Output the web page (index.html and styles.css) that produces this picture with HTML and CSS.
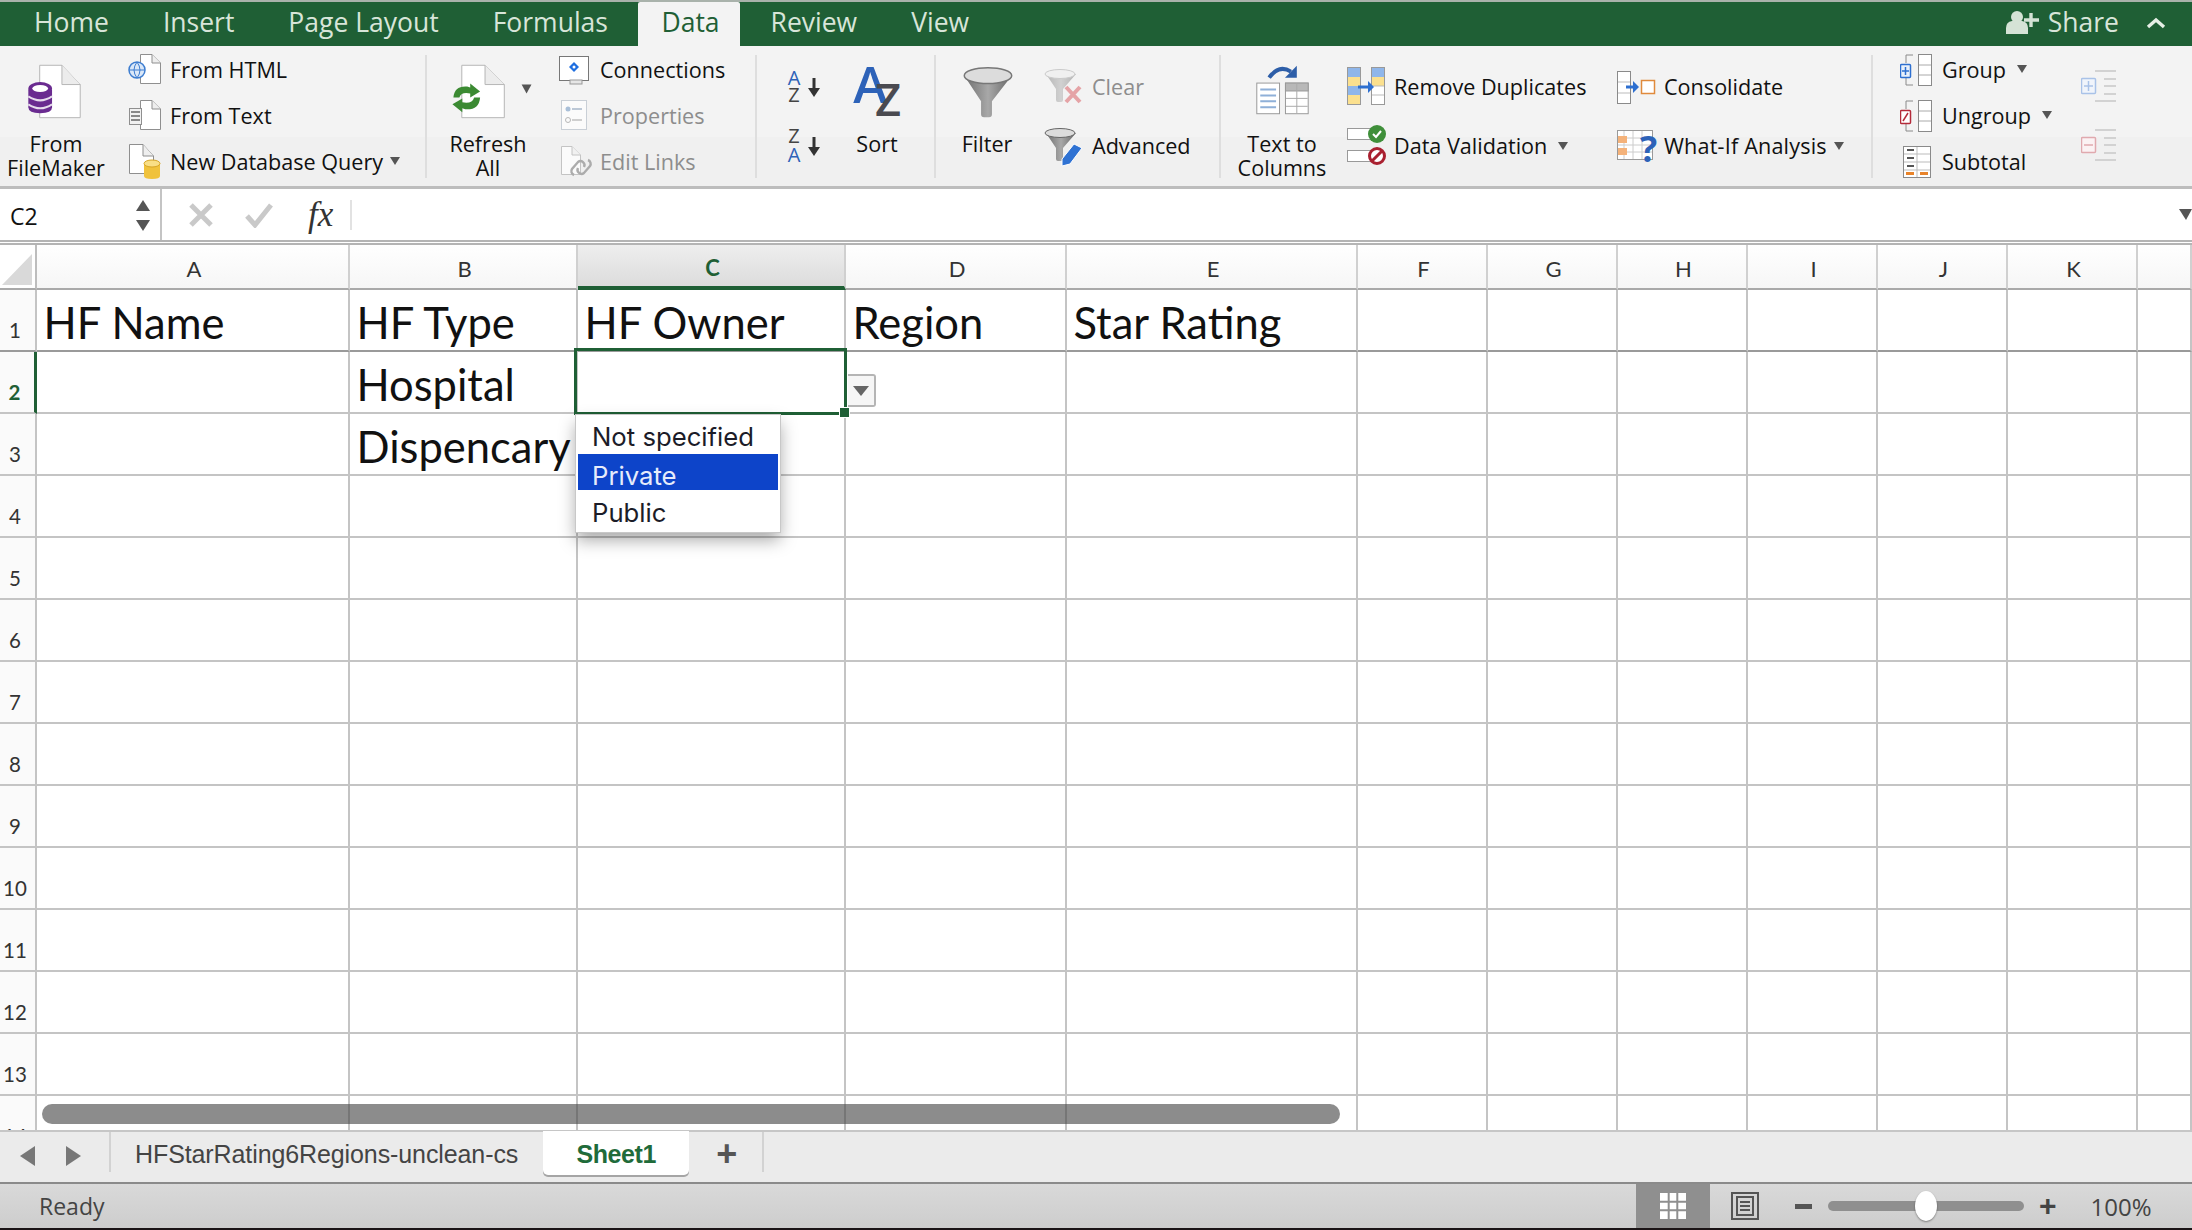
FILE: index.html
```html
<!DOCTYPE html>
<html lang="en">
<head>
<meta charset="utf-8">
<title>Excel</title>
<link rel="stylesheet" href="styles.css">
</head>
<body>
<div class="app">
  <header class="tabbar">
    <nav class="tabs">
      <span class="tab">Home</span><span class="tab">Insert</span><span class="tab">Page Layout</span><span class="tab">Formulas</span><span class="tab active">Data</span><span class="tab">Review</span><span class="tab">View</span>
    </nav>
    <div class="share">
      <svg width="34" height="24" viewBox="2006 10 34 24"><circle cx="2017" cy="16" r="6" fill="#d5e3d6"/><path d="M2006 33v-6q0-6 6-7h10q6 1 6 7v6z" fill="#d5e3d6"/><path d="M2031 12v14M2024 19h15" stroke="#d5e3d6" stroke-width="3.4"/></svg>
      <span class="share-text">Share</span>
      <svg class="chev" width="20" height="12" viewBox="0 0 20 12"><path d="M2 10l8-7 8 7" fill="none" stroke="#e6efe6" stroke-width="3.4"/></svg>
    </div>
  </header>

  <section class="ribbon">
    <div class="big w112">
      <svg width="112" height="86" viewBox="0 47 112 86">
        <path d="M39.5 65.5H62L80.5 85V118.5H39.5Z" fill="#fff" stroke="#b5b5b5"/><path d="M62 65.5V85H80.5" fill="#ececec" stroke="#b5b5b5"/>
        <path d="M28 90v18q0 6 12 6t12-6V90z" fill="#6a2b90"/>
        <ellipse cx="40" cy="89" rx="12" ry="6.5" fill="#6a2b90"/><ellipse cx="40" cy="89" rx="8" ry="3.6" fill="#fff"/>
        <path d="M28 97q12 8 24 0M28 105q12 8 24 0" fill="none" stroke="#e6dcec" stroke-width="2"/>
      </svg>
      <div class="label">From<br>FileMaker</div>
    </div>
    <div class="stack w297 ml16">
      <div class="item">
        <svg width="42" height="46" viewBox="128 47 42 46"><path d="M140.5 55.5H152L160.5 64V84.5H140.5Z" fill="#fff" stroke="#8f8f8f"/><path d="M152 55.5V64H160.5" fill="#eee" stroke="#8f8f8f"/><circle cx="137" cy="71" r="8" fill="#dbe8f8" stroke="#3d7dd0" stroke-width="1.5"/><path d="M129 71h16M137 63q-6 8 0 16M137 63q6 8 0 16" fill="none" stroke="#3d7dd0"/></svg>
        From HTML
      </div>
      <div class="item">
        <svg width="42" height="46" viewBox="128 93 42 46"><path d="M140.5 101.5H152L160.5 110V130.5H140.5Z" fill="#fff" stroke="#8f8f8f"/><path d="M152 101.5V110H160.5" fill="#eee" stroke="#8f8f8f"/><rect x="129.5" y="109.5" width="12" height="16" fill="#f1f1f1" stroke="#8f8f8f"/><path d="M131 113h9M131 117h9M131 121h9" stroke="#666" stroke-width="1.5"/></svg>
        From Text
      </div>
      <div class="item">
        <svg width="42" height="46" viewBox="128 139 42 46"><path d="M129.5 145.5H143L153.5 157V174.5H129.5Z" fill="#fff" stroke="#8f8f8f"/><path d="M143 145.5V157H153.5" fill="#eee" stroke="#8f8f8f"/><path d="M144 165v12q0 3 8 3t8-3v-12z" fill="#f0c23c"/><ellipse cx="152" cy="164.500" rx="8" ry="3.500" fill="#f9df86" stroke="#d6a526"/></svg>
        New Database Query<i class="caret ml10"></i>
      </div>
    </div>
    <div class="sep"></div>

    <div class="big w122">
      <svg width="122" height="86" viewBox="427 47 122 86">
        <path d="M461.500 65.500H485L504.500 85V118.500H461.500Z" fill="#fff" stroke="#b5b5b5"/><path d="M485 65.500V85H504.500" fill="#ececec" stroke="#b5b5b5"/>
        <path d="M453 98q1-12 14-11l3 1v-4l10 8-10 6v-4q-9-2-11 4z" fill="#3b8a32"/>
        <path d="M480 98q-1 13-15 12l-3-1v4l-10-8 10-6v4q10 2 12-5z" fill="#3b8a32"/>
        <path d="M522 85h10l-5 9z" fill="#555"/>
      </svg>
      <div class="label">Refresh<br>All</div>
    </div>
    <div class="stack w202 ml4">
      <div class="item">
        <svg width="47" height="46" viewBox="553 47 47 46"><rect x="559.500" y="57.500" width="29" height="24" fill="#fff" stroke="#777"/><rect x="570" y="81" width="12" height="4" fill="#e6e6e6" stroke="#999"/><path d="M574 63l5 5-5 5-5-5z" fill="#1f6fe0"/><circle cx="574" cy="68" r="1.500" fill="#fff"/></svg>
        Connections
      </div>
      <div class="item dim">
        <svg width="47" height="46" viewBox="553 93 47 46"><rect x="561.500" y="101.500" width="25" height="29" fill="#fbfbfb" stroke="#c9cfd6"/><circle cx="568" cy="110" r="2.500" fill="#a9bfd8"/><path d="M572 110h10" stroke="#bcc8d6" stroke-width="2"/><circle cx="568" cy="121" r="2.500" fill="none" stroke="#b7b7b7"/><path d="M572 121h10" stroke="#cfcfcf" stroke-width="2"/></svg>
        Properties
      </div>
      <div class="item dim">
        <svg width="47" height="46" viewBox="553 139 47 46"><path d="M561.500 147.500H572L580.500 156V175.500H561.500Z" fill="#fbfbfb" stroke="#c4c4c4"/><path d="M572 147.500V156H580.500" fill="#f1f1f1" stroke="#c4c4c4"/><path d="M574 176a4 4 0 0 1-2-6l6-7a4 4 0 0 1 6 5M588 161a4 4 0 0 1 2 6l-6 7a4 4 0 0 1-6-5" fill="none" stroke="#acacac" stroke-width="2.400"/></svg>
        Edit Links
      </div>
    </div>
    <div class="sep"></div>

    <div class="stack2 w75">
      <div class="center">
        <svg width="75" height="46" viewBox="757 64 75 46"><text x="794" y="84.500" class="az blue">A</text><text x="794" y="102" class="az dark">Z</text><path d="M814 78v12" stroke="#333" stroke-width="3"/><path d="M808 88h12l-6 9z" fill="#333"/></svg>
      </div>
      <div class="center">
        <svg width="75" height="46" viewBox="757 124 75 46"><text x="794" y="143.500" class="az dark">Z</text><text x="794" y="163" class="az blue">A</text><path d="M814 138v12" stroke="#333" stroke-width="3"/><path d="M808 148h12l-6 9z" fill="#333"/></svg>
      </div>
    </div>
    <div class="big w90">
      <svg width="90" height="86" viewBox="832 47 90 86"><text x="853" y="104" class="bigA">A</text><text x="875" y="117" class="bigZ">Z</text></svg>
      <div class="label">Sort<br>&nbsp;</div>
    </div>
    <div class="sep ml12"></div>

    <div class="big w102">
      <svg width="102" height="86" viewBox="936 47 102 86">
        <defs><linearGradient id="fn" x1="0" x2="1" y1="0" y2="0"><stop offset="0" stop-color="#6e6e6e"/><stop offset=".5" stop-color="#a8a8a8"/><stop offset="1" stop-color="#666"/></linearGradient></defs>
        <path d="M964 76l17 26v13q0 3 3 3h5q3 0 3-3v-13l20-26z" fill="url(#fn)"/>
        <ellipse cx="988" cy="76" rx="24" ry="8" fill="#dcdcdc" stroke="#777" stroke-width="1.500"/>
      </svg>
      <div class="label">Filter<br>&nbsp;</div>
    </div>
    <div class="stack2 w181">
      <div class="item dim">
        <svg width="54" height="46" viewBox="1038 64 54 46"><g opacity=".45"><path d="M1046 74l10 15v11q0 2 2 2h3q2 0 2-2v-11l13-15z" fill="url(#fn)"/><ellipse cx="1060" cy="74" rx="15" ry="4.500" fill="#eee" stroke="#999"/></g><path d="M1066 87l14 15M1080 87l-14 15" stroke="#e5a3a6" stroke-width="4"/></svg>
        Clear
      </div>
      <div class="item">
        <svg width="54" height="46" viewBox="1038 124 54 46"><path d="M1046 134l10 15v11q0 2 2 2h3q2 0 2-2v-11l13-15z" fill="url(#fn)"/><ellipse cx="1060" cy="134" rx="15" ry="4.500" fill="#dcdcdc" stroke="#666"/><path d="M1062 160l12-15 8 4-12 16-8 2z" fill="#2f72d3" stroke="#fff"/></svg>
        Advanced
      </div>
    </div>
    <div class="sep"></div>

    <div class="big w122">
      <svg width="122" height="86" viewBox="1221 47 122 86">
        <path d="M1269 78q10-14 22-6" fill="none" stroke="#2d5ea8" stroke-width="4"/><path d="M1297 66v12h-12z" fill="#2d5ea8"/>
        <rect x="1256.500" y="83.500" width="23" height="31" fill="#fff" stroke="#999"/><path d="M1260 90h16M1260 96h16M1260 102h16M1260 108h16" stroke="#8fb0d8" stroke-width="2"/>
        <rect x="1285.500" y="83.500" width="23" height="31" fill="#fff" stroke="#999"/><rect x="1285.500" y="83.500" width="23" height="8" fill="#b8b8b8" stroke="#999"/><path d="M1297 84v30M1286 99h22M1286 107h22" stroke="#aaa"/>
      </svg>
      <div class="label">Text to<br>Columns</div>
    </div>
    <div class="stack2 w270 ml4">
      <div class="item">
        <svg width="47" height="46" viewBox="1347 64 47 46"><rect x="1347.500" y="67.500" width="13" height="37" fill="#fff" stroke="#999"/><path d="M1348 68h12v9h-12z" fill="#8fb6ea"/><path d="M1348 77h12v9h-12z" fill="#fbe08e"/><path d="M1348 86h12v9h-12z" fill="#8fb6ea"/><path d="M1348 95h12v9h-12z" fill="#fbe08e"/><rect x="1371.500" y="67.500" width="13" height="37" fill="#fff" stroke="#999"/><path d="M1372 68h12v9h-12z" fill="#8fb6ea"/><path d="M1372 77h12v9h-12z" fill="#fbe08e"/><path d="M1372 86h12M1372 95h12" stroke="#bbb"/><path d="M1358 87h12" stroke="#2d6fd0" stroke-width="3"/><path d="M1368 81l6 6-6 6z" fill="#2d6fd0"/></svg>
        Remove Duplicates
      </div>
      <div class="item">
        <svg width="47" height="46" viewBox="1347 124 47 46"><rect x="1347.500" y="129.500" width="28" height="11" fill="#fff" stroke="#999"/><rect x="1347.500" y="151.500" width="28" height="11" fill="#fff" stroke="#999"/><circle cx="1377" cy="135" r="9" fill="#3f8f3a"/><path d="M1373 135l3 3 5-6" fill="none" stroke="#fff" stroke-width="2"/><circle cx="1377" cy="157" r="7.500" fill="#fff" stroke="#a92030" stroke-width="3"/><path d="M1372 162l10-10" stroke="#a92030" stroke-width="3"/></svg>
        Data Validation<i class="caret ml12"></i>
      </div>
    </div>
    <div class="stack2 w254">
      <div class="item">
        <svg width="47" height="46" viewBox="1617 64 47 46"><rect x="1617.500" y="71.500" width="13" height="32" fill="#fff" stroke="#8a8a8a"/><path d="M1618 82h12M1618 93h12" stroke="#bbb"/><path d="M1626 87h9" stroke="#2d6fd0" stroke-width="3"/><path d="M1633 81l6 6-6 6z" fill="#2d6fd0"/><rect x="1641.500" y="80.500" width="13" height="13" fill="#fff" stroke="#e08a3c" stroke-width="1.500"/></svg>
        Consolidate
      </div>
      <div class="item">
        <svg width="47" height="46" viewBox="1617 124 47 46"><rect x="1617.500" y="131.500" width="35" height="29" fill="#fff" stroke="#999"/><path d="M1624 132v28M1633 132v28M1642 132v28M1618 139h34M1618 146h34M1618 153h34" stroke="#ccc"/><rect x="1618" y="137" width="9" height="7" fill="#f4b27a"/><rect x="1618" y="149" width="9" height="7" fill="#f4b27a"/><text x="1640" y="163" class="qm">?</text></svg>
        <span class="wide">What-If Analysis</span><i class="caret ml6"></i>
      </div>
    </div>
    <div class="sep"></div>

    <div class="stack w180 ml28">
      <div class="item">
        <svg width="42" height="46" viewBox="1900 47 42 46"><rect x="1918.500" y="55.500" width="13" height="31" fill="#fff" stroke="#8a8a8a"/><path d="M1919 66h12M1919 76h12" stroke="#aaa"/><path d="M1913 56h-7v8M1906 78v8h7" fill="none" stroke="#8a8a8a"/><rect x="1900.500" y="65.500" width="10" height="13" rx="1" fill="#e8f0fb" stroke="#2d6fd0" stroke-width="1.500"/><path d="M1902 72h7M1905.500 68v8" stroke="#2d6fd0" stroke-width="1.500"/></svg>
        Group<i class="caret ml14"></i>
      </div>
      <div class="item">
        <svg width="42" height="46" viewBox="1900 93 42 46"><rect x="1918.500" y="101.500" width="13" height="31" fill="#fff" stroke="#8a8a8a"/><path d="M1919 112h12M1919 122h12" stroke="#aaa"/><path d="M1913 102h-7v8M1906 124v8h7" fill="none" stroke="#8a8a8a"/><rect x="1900.500" y="111.500" width="10" height="13" rx="1" fill="#fff" stroke="#b42b3a" stroke-width="1.500"/><path d="M1903 122l5-8" stroke="#b42b3a" stroke-width="1.500"/></svg>
        Ungroup<i class="caret ml14"></i>
      </div>
      <div class="item">
        <svg width="42" height="46" viewBox="1900 139 42 46"><rect x="1903.500" y="147.500" width="27" height="31" fill="#fff" stroke="#8a8a8a"/><path d="M1917 148v30M1904 155h26M1904 163h26M1904 171h26" stroke="#bbb"/><path d="M1907 151h7M1907 159h7M1907 167h7" stroke="#555" stroke-width="2"/><path d="M1906 173h8v3h-8zM1920 173h8v3h-8z" fill="#e8832a"/></svg>
        Subtotal
      </div>
    </div>
    <div class="stack2 outline">
      <div class="center">
        <svg width="36" height="46" viewBox="2081 64 36 46"><path d="M2095 71h21M2104 79h12M2104 86h12M2104 94h12M2095 101h21" stroke="#d2d2d2" stroke-width="2"/><rect x="2081.500" y="78.500" width="14" height="15" rx="1" fill="#f0f4fb" stroke="#a9c2e8" stroke-width="1.500"/><path d="M2084 86h9M2088.500 81v10" stroke="#a9c2e8" stroke-width="1.500"/></svg>
      </div>
      <div class="center">
        <svg width="36" height="46" viewBox="2081 124 36 46"><path d="M2095 131h21M2104 139h12M2104 146h12M2104 154h12M2095 161h21" stroke="#d2d2d2" stroke-width="2"/><rect x="2081.500" y="138.500" width="14" height="15" rx="1" fill="#fbf2f3" stroke="#e0a9ae" stroke-width="1.500"/><path d="M2084 146h9" stroke="#e0a9ae" stroke-width="1.500"/></svg>
      </div>
    </div>
  </section>

  <section class="formula">
    <div class="namebox">
      <span>C2</span>
      <div class="spin"><i class="up"></i><i class="down"></i></div>
    </div>
    <div class="fbtns">
      <svg width="26" height="26" viewBox="0 0 26 26"><path d="M3 3l20 20M23 3L3 23" stroke="#c9c9c9" stroke-width="5"/></svg>
      <svg width="30" height="26" viewBox="0 0 30 26"><path d="M3 14l8 9L27 3" fill="none" stroke="#c9c9c9" stroke-width="5"/></svg>
      <span class="fx">fx</span>
    </div>
    <div class="finput"></div>
    <i class="fdrop"></i>
  </section>

  <main class="sheet">
    <div class="grid">
      <div class="corner"><i class="tri"></i></div>
      <div class="ch">A</div><div class="ch">B</div><div class="ch cur">C</div><div class="ch">D</div><div class="ch">E</div><div class="ch">F</div><div class="ch">G</div><div class="ch">H</div><div class="ch">I</div><div class="ch">J</div><div class="ch">K</div><div class="ch"></div>

      <div class="rh r1">1</div><div class="c r1">HF Name</div><div class="c r1">HF Type</div><div class="c r1">HF Owner</div><div class="c r1">Region</div><div class="c r1">Star Rating</div><div class="c r1"></div><div class="c r1"></div><div class="c r1"></div><div class="c r1"></div><div class="c r1"></div><div class="c r1"></div><div class="c r1"></div>
      <div class="rh cur">2</div><div class="c"></div><div class="c">Hospital</div><div class="c"></div><div class="c"></div><div class="c"></div><div class="c"></div><div class="c"></div><div class="c"></div><div class="c"></div><div class="c"></div><div class="c"></div><div class="c"></div>
      <div class="rh">3</div><div class="c"></div><div class="c">Dispencary</div><div class="c"></div><div class="c"></div><div class="c"></div><div class="c"></div><div class="c"></div><div class="c"></div><div class="c"></div><div class="c"></div><div class="c"></div><div class="c"></div>
      <div class="rh">4</div><div class="c"></div><div class="c"></div><div class="c"></div><div class="c"></div><div class="c"></div><div class="c"></div><div class="c"></div><div class="c"></div><div class="c"></div><div class="c"></div><div class="c"></div><div class="c"></div>
      <div class="rh">5</div><div class="c"></div><div class="c"></div><div class="c"></div><div class="c"></div><div class="c"></div><div class="c"></div><div class="c"></div><div class="c"></div><div class="c"></div><div class="c"></div><div class="c"></div><div class="c"></div>
      <div class="rh">6</div><div class="c"></div><div class="c"></div><div class="c"></div><div class="c"></div><div class="c"></div><div class="c"></div><div class="c"></div><div class="c"></div><div class="c"></div><div class="c"></div><div class="c"></div><div class="c"></div>
      <div class="rh">7</div><div class="c"></div><div class="c"></div><div class="c"></div><div class="c"></div><div class="c"></div><div class="c"></div><div class="c"></div><div class="c"></div><div class="c"></div><div class="c"></div><div class="c"></div><div class="c"></div>
      <div class="rh">8</div><div class="c"></div><div class="c"></div><div class="c"></div><div class="c"></div><div class="c"></div><div class="c"></div><div class="c"></div><div class="c"></div><div class="c"></div><div class="c"></div><div class="c"></div><div class="c"></div>
      <div class="rh">9</div><div class="c"></div><div class="c"></div><div class="c"></div><div class="c"></div><div class="c"></div><div class="c"></div><div class="c"></div><div class="c"></div><div class="c"></div><div class="c"></div><div class="c"></div><div class="c"></div>
      <div class="rh">10</div><div class="c"></div><div class="c"></div><div class="c"></div><div class="c"></div><div class="c"></div><div class="c"></div><div class="c"></div><div class="c"></div><div class="c"></div><div class="c"></div><div class="c"></div><div class="c"></div>
      <div class="rh">11</div><div class="c"></div><div class="c"></div><div class="c"></div><div class="c"></div><div class="c"></div><div class="c"></div><div class="c"></div><div class="c"></div><div class="c"></div><div class="c"></div><div class="c"></div><div class="c"></div>
      <div class="rh">12</div><div class="c"></div><div class="c"></div><div class="c"></div><div class="c"></div><div class="c"></div><div class="c"></div><div class="c"></div><div class="c"></div><div class="c"></div><div class="c"></div><div class="c"></div><div class="c"></div>
      <div class="rh">13</div><div class="c"></div><div class="c"></div><div class="c"></div><div class="c"></div><div class="c"></div><div class="c"></div><div class="c"></div><div class="c"></div><div class="c"></div><div class="c"></div><div class="c"></div><div class="c"></div>
      <div class="rh">14</div><div class="c"></div><div class="c"></div><div class="c"></div><div class="c"></div><div class="c"></div><div class="c"></div><div class="c"></div><div class="c"></div><div class="c"></div><div class="c"></div><div class="c"></div><div class="c"></div>
    </div>
    <div class="selection"><i class="handle"></i></div>
    <div class="ddbtn"><i></i></div>
    <ul class="popup">
      <li>Not specified</li>
      <li class="on">Private</li>
      <li>Public</li>
    </ul>
    <div class="hscroll"></div>
  </main>

  <section class="sheetbar">
    <div class="navs"><i class="left"></i><i class="right"></i></div>
    <div class="stab">HFStarRating6Regions-unclean-cs</div>
    <div class="stab on">Sheet1</div>
    <div class="plus">+</div>
  </section>

  <footer class="status">
    <span class="ready">Ready</span>
    <div class="views">
      <div class="vbtn on">
        <svg width="26" height="26" viewBox="0 0 26 26"><rect width="26" height="26" fill="#fff"/><path d="M8.700 0v26M17.300 0v26M0 8.700h26M0 17.300h26" stroke="#8f8f8f" stroke-width="2"/></svg>
      </div>
      <div class="vbtn">
        <svg width="28" height="28" viewBox="0 0 28 28"><rect x="1" y="1" width="26" height="26" fill="none" stroke="#555" stroke-width="2"/><rect x="6" y="5" width="16" height="18" fill="none" stroke="#555" stroke-width="2"/><path d="M9 10h10M9 14h10M9 18h10" stroke="#555" stroke-width="2"/></svg>
      </div>
    </div>
    <div class="zoomctl">
      <i class="minus"></i>
      <div class="slider"><i class="thumb"></i></div>
      <span class="zplus">+</span>
      <span class="pct">100%</span>
    </div>
  </footer>
  <div class="desk"></div>
</div>
</body>
</html>
```
FILE: styles.css
```css
* { box-sizing: border-box; }
html, body { margin: 0; padding: 0; }
body { width: 2192px; height: 1230px; overflow: hidden; background: #111; font-family: "Open Sans", "Liberation Sans", sans-serif; color: #111; }
.app { width: 2192px; height: 1230px; display: flex; flex-direction: column; }
i { display: block; }

.tabbar { height: 46px; flex: none; background: #1f5f35; border-top: 2px solid #a9b2ab; display: flex; justify-content: space-between; align-items: stretch; }
.tabs { display: flex; padding-left: 10.5px; gap: 7px; }
.tab { padding: 0 23.5px; font-size: 26.5px; line-height: 40px; color: #d8e5d9; }
.tab.active { background: #f3f3f3; color: #1f5f35; border-radius: 2px 2px 0 0; padding: 0 20.5px 0 23px; }
.share { display: flex; align-items: center; padding-right: 26px; padding-bottom: 2px; color: #d8e5d9; }
.share-text { font-size: 26.5px; margin-left: 8px; line-height: 36px; margin-bottom: 2px; }
.chev { margin-left: 27px; }

.ribbon { height: 140px; flex: none; display: flex; align-items: center; background: linear-gradient(#f3f3f3 65%, #f0f0f0 65%); font-size: 21.6px; color: #111; }
.sep { width: 2px; height: 123px; background: #dedede; flex: none; }
.big { flex: none; display: flex; flex-direction: column; align-items: center; height: 140px; padding-top: 1px; }
.big svg { display: block; height: 85px; flex: none; }
.w112 { width: 112px; } .w122 { width: 122px; } .w90 { width: 90px; } .w102 { width: 102px; } .w75 { width: 75px; }
.w181 { width: 181px; } .w270 { width: 270px; } .w254 { width: 254px; } .w297 { width: 297px; } .w202 { width: 202px; } .w180 { width: 180px; }
.label { text-align: center; line-height: 24px; white-space: nowrap; font-size: 21.6px; }
.stack { display: flex; flex-direction: column; height: 138px; flex: none; margin-bottom: 2px; }
.stack2 { display: flex; flex-direction: column; height: 118px; flex: none; }
.stack .item { height: 46px; }
.stack2 .item, .stack2 .center { height: 59px; }
.item { display: flex; align-items: center; white-space: nowrap; }
.item svg, .center svg { flex: none; display: block; }
.center { display: flex; align-items: center; justify-content: center; }
.dim { color: #8d8d8d; }
.wide { letter-spacing: .18px; }
.ml16 { margin-left: 16px; } .ml4 { margin-left: 4px; } .ml12 { margin-left: 12px; } .ml28 { margin-left: 27px; }
.outline { margin-left: 1px; }
.caret { width: 0; height: 0; border-left: 5px solid transparent; border-right: 5px solid transparent; border-top: 8px solid #555; flex: none; }
.caret.ml10 { margin-left: 7px; } .caret.ml12 { margin-left: 11px; } .caret.ml6 { margin-left: 7px; } .caret.ml14 { margin-left: 11px; }
.az { font: 400 20px "Open Sans", sans-serif; text-anchor: middle; }
.blue { fill: #2d62b8; } .dark { fill: #444; }
.bigA { font: 600 52px "Open Sans", sans-serif; fill: #2d62b8; }
.bigZ { font: 600 46px "Open Sans", sans-serif; fill: #4a4a50; }
.qm { font: 700 36px "Open Sans", sans-serif; fill: #2d62b8; }

.formula { height: 59px; flex: none; background: #fff; border-top: 3px solid #bdbdbd; border-bottom: 5px double #b4b4b4; display: flex; align-items: center; position: relative; }
.namebox { width: 162px; height: 51px; flex: none; border-right: 2px solid #c4c4c4; display: flex; align-items: center; justify-content: space-between; padding: 2px 10px 0; font-size: 23px; }
.spin { display: flex; flex-direction: column; gap: 9px; }
.spin .up { width: 0; height: 0; border-left: 7px solid transparent; border-right: 7px solid transparent; border-bottom: 11px solid #555; }
.spin .down { width: 0; height: 0; border-left: 7px solid transparent; border-right: 7px solid transparent; border-top: 11px solid #555; }
.fbtns { display: flex; align-items: center; gap: 30px; padding-left: 26px; width: 190px; height: 30px; border-right: 2px solid #e2e2e2; flex: none; }
.fx { font: italic 400 35px "Liberation Serif", serif; color: #333; margin-left: 4px; }
.finput { flex: 1; }
.fdrop { width: 0; height: 0; border-left: 7px solid transparent; border-right: 6px solid transparent; border-top: 11px solid #555; }

.sheet { height: 885px; flex: none; position: relative; overflow: hidden; background: #fff; }
.grid { display: grid; grid-template-columns: 37px 313px 228px 268px 221px 291px 130px 130px 130px 130px 130px 130px 54px; grid-template-rows: 45px repeat(14, 62px); background-color: #fff; }
.corner { background: #fff; border-right: 2px solid #bdbdbd; border-bottom: 2px solid #a9a9a9; padding: 9px 0 0 2px; }
.tri { width: 0; height: 0; border-style: solid; border-width: 0 0 31px 30px; border-color: transparent transparent #d9d9d9 transparent; }
.ch { background: linear-gradient(#fff, #f6f6f6); border-right: 2px solid #d0d0d0; border-bottom: 2px solid #a9a9a9; display: flex; align-items: center; justify-content: center; padding: 3px 0 0 3px; font-family: "Lato", sans-serif; font-size: 22px; color: #333; }
.ch.cur { background: linear-gradient(#eeeeee, #dcdcdc); border-bottom: 4px solid #1f5f35; color: #1f5f35; font-weight: 700; }
.rh { background: #fafafa; border-right: 2px solid #c4c4c4; border-bottom: 2px solid #c4c4c4; display: flex; align-items: flex-end; justify-content: center; padding: 0 5px 8px 0; font-family: "Lato", sans-serif; font-size: 20.5px; color: #333; }
.rh.cur { color: #1f5f35; font-weight: 700; border-right: 3px solid #1f5f35; }
.c { border-right: 2px solid #c4c4c4; border-bottom: 2px solid #c4c4c4; font-family: "Lato", sans-serif; font-size: 43.5px; line-height: 56px; padding-left: 6.5px; display: flex; align-items: flex-end; white-space: nowrap; color: #111; min-width: 0; }
.r1 { border-bottom-color: #9a9a9a; }

.selection { position: absolute; left: 574px; top: 103px; width: 273px; height: 67px; border: 3px solid #1f5f35; pointer-events: none; }
.handle { position: absolute; right: -6px; bottom: -6px; width: 11px; height: 11px; background: #1f5f35; border: 1px solid #fff; }
.ddbtn { position: absolute; left: 848px; top: 129px; width: 28px; height: 33px; background: #f6f6f6; border: 2px solid #b5b5b5; border-left: none; border-radius: 0 3px 3px 0; display: flex; align-items: center; justify-content: center; }
.ddbtn i { width: 0; height: 0; border-left: 8px solid transparent; border-right: 8px solid transparent; border-top: 10px solid #666; }
.popup { position: absolute; left: 576px; top: 170px; width: 204px; height: 117px; margin: 0; padding: 2px; list-style: none; background: #fff; box-shadow: 0 0 0 1px #c8c8c8, 0 8px 16px rgba(0,0,0,.35); font-family: "Inter", sans-serif; font-size: 25.7px; color: #1c1c28; }
.popup li { height: 36px; padding-left: 14px; line-height: 43px; white-space: nowrap; }
.popup li:first-child { height: 37px; line-height: 40px; }
.popup li:last-child { line-height: 46px; }
.popup li.on { background: #0d44c9; color: #e6ecfb; }
.hscroll { position: absolute; left: 42px; top: 859px; width: 1298px; height: 20px; border-radius: 10px; background: rgba(70,70,70,.62); }

.sheetbar { height: 52px; flex: none; background: #ebebeb; border-top: 2px solid #c6c6c6; display: flex; align-items: flex-start; font-family: "Liberation Sans", sans-serif; color: #444; }
.navs { display: flex; gap: 31px; width: 111px; height: 40px; padding-left: 20px; align-items: center; padding-top: 8px; border-right: 2px solid #d2d2d2; flex: none; }
.navs .left { width: 0; height: 0; border-top: 10px solid transparent; border-bottom: 10px solid transparent; border-right: 15px solid #777; }
.navs .right { width: 0; height: 0; border-top: 10px solid transparent; border-bottom: 10px solid transparent; border-left: 15px solid #777; }
.stab { font-size: 25px; line-height: 44px; padding: 0 25px 0 24px; letter-spacing: -.1px; white-space: nowrap; }
.stab.on { width: 146px; height: 44px; margin-top: -1px; padding: 0; line-height: 46px; text-align: center; background: #fff; color: #1f6b3a; font-weight: 700; letter-spacing: -.4px; border-radius: 0 0 5px 5px; box-shadow: 0 2px 0 #a5a5a5; }
.plus { width: 75px; height: 40px; border-right: 2px solid #d2d2d2; text-align: center; padding-left: 2px; font: 700 36px/44px "Liberation Sans", sans-serif; color: #555; flex: none; }

.status { height: 46px; flex: none; border-top: 2px solid #8a8a8a; background: linear-gradient(#d9d9d9, #cdcdcd); display: flex; align-items: stretch; font-size: 23px; color: #444; }
.ready { margin-left: 39px; line-height: 44px; }
.views { display: flex; margin-left: auto; }
.vbtn { display: flex; align-items: center; justify-content: center; width: 74px; height: 44px; }
.vbtn.on { background: #8f8f8f; }
.vbtn + .vbtn { width: 70px; }
.zoomctl { display: flex; align-items: center; margin-left: 15px; width: 397px; flex: none; }
.minus { width: 17px; height: 5px; background: #555; flex: none; }
.slider { width: 196px; height: 10px; border-radius: 5px; background: #8f8f8f; margin-left: 16px; position: relative; flex: none; }
.thumb { position: absolute; left: 87px; top: -10px; width: 22px; height: 30px; border-radius: 50%; background: #fff; box-shadow: 0 1px 2px rgba(0,0,0,.4); }
.zplus { font: 700 30px "Liberation Sans", sans-serif; color: #444; margin-left: 15px; }
.pct { margin-left: 34px; font-size: 24px; }
.desk { height: 2px; flex: none; background: #1b1416; }
```
